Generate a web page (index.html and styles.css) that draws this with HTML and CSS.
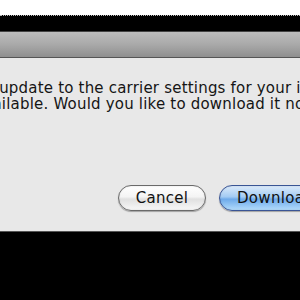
FILE: index.html
```html
<!DOCTYPE html>
<html>
<head>
<meta charset="utf-8">
<link rel="stylesheet" href="styles.css">
</head>
<body>
<div class="top"></div>
<div class="menubar"></div>
<div class="titlebar"></div>
<div class="sheet">
  <p class="message">An update to the carrier settings for your iPhone is<br>available. Would you like to download it now?</p>
  <div class="buttons">
    <button class="btn">Cancel</button>
    <button class="btn primary">Download</button>
  </div>
</div>
<div class="bottom"></div>
</body>
</html>
```
FILE: styles.css
```css
html, body {
  margin: 0;
  padding: 0;
  width: 300px;
  height: 300px;
  overflow: hidden;
  background: #000;
  font-family: "DejaVu Sans", "Lucida Grande", sans-serif;
}
.top {
  height: 15px;
  background: #fff;
}
.menubar {
  height: 16px;
  background: #000;
  border-top: 1px dotted #bbb;
  box-sizing: border-box;
}
.titlebar {
  height: 27px;
  background: linear-gradient(#444 0, #444 1px, #bdbdbd 1px, #a9a9a9 50%, #8f8f8f 96%, #555 96%);
}
.sheet {
  height: 173px;
  background: #e8e8e8;
  border-bottom: 1px solid #555;
  display: flex;
  flex-direction: column;
  overflow: hidden;
}
.message {
  margin: 22px 0 0 -26px;
  font-size: 15px;
  line-height: 16px;
  letter-spacing: 0.2px;
  color: #151515;
  white-space: nowrap;
}
.buttons {
  display: flex;
  gap: 13px;
  margin: 73px 0 0 118px;
}
.btn {
  flex: none;
  height: 26px;
  width: 88px;
  border-radius: 13px;
  border: 1px solid #6a6a6a;
  background: linear-gradient(#ffffff 0%, #f4f4f4 45%, #e0e0e0 55%, #f8f8f8 100%);
  box-shadow: 0 1px 1px rgba(0,0,0,0.3), inset 0 0 2px rgba(0,0,0,0.15);
  font-family: "DejaVu Sans", sans-serif;
  font-size: 15px;
  letter-spacing: 0.3px;
  color: #111;
  padding: 0 0 1px;
}
.primary {
  width: 110px;
  border-color: #3a5595;
  background: linear-gradient(#dcebfb 0%, #a3cbf3 45%, #6eaaea 55%, #b3dcfc 100%);
  text-align: left;
  padding-left: 17px;
}
```
